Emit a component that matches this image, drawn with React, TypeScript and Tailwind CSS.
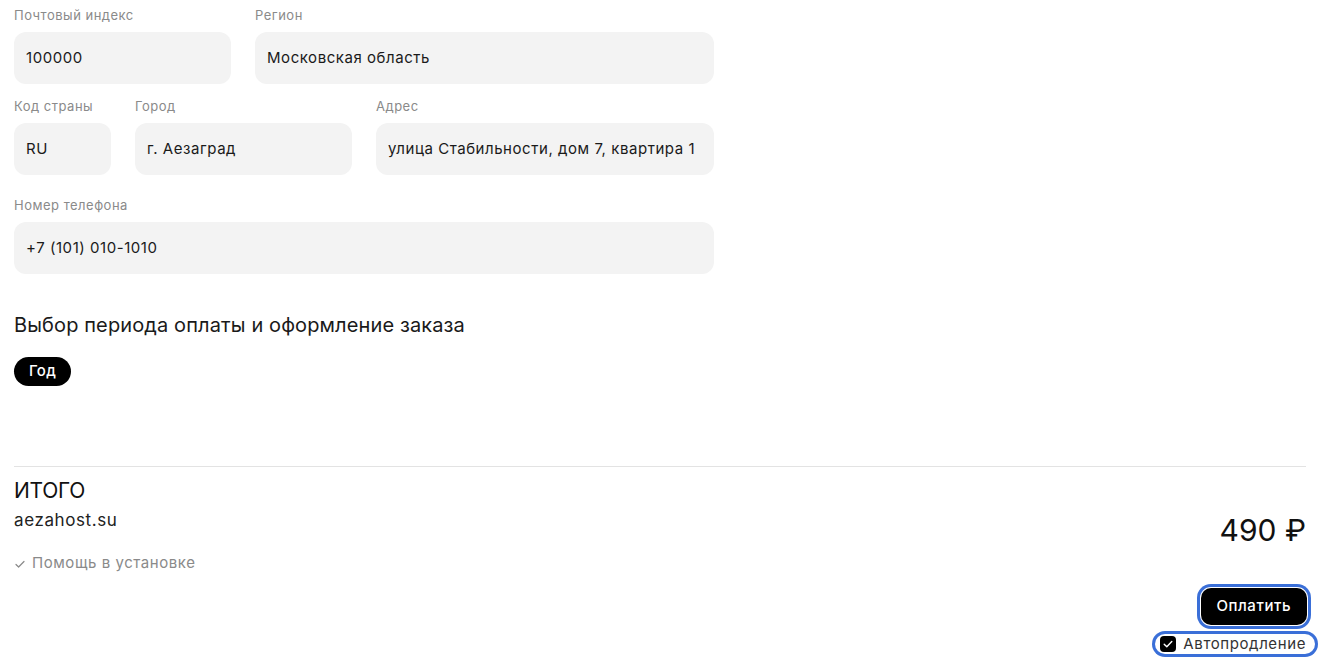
import React from "react";

function Field({ label, value, className }: { label: string; value: string; className: string }) {
  return (
    <div className={"flex flex-col " + className}>
      <div className="text-[13px] leading-[18px] tracking-[0.5px] text-[#8a8a8a]">{label}</div>
      <div className="mt-2 h-[52px] rounded-[12px] bg-[#f3f3f3] flex items-center px-[12px] text-[15px] tracking-[0.55px] text-[#1a1a1a] whitespace-nowrap">
        {value}
      </div>
    </div>
  );
}

export default function App() {
  return (
    <div
      className="w-[1323px] h-[670px] bg-white overflow-hidden pl-[14px] pr-[17px] pt-[6px] text-[#111]"
      style={{ fontFamily: "Inter, 'Noto Sans', sans-serif" }}
    >
      <div className="w-[700px] flex flex-col">
        <div className="flex gap-6">
          <Field label="Почтовый индекс" value="100000" className="w-[217px]" />
          <Field label="Регион" value="Московская область" className="flex-1" />
        </div>
        <div className="flex gap-6 mt-[13px]">
          <Field label="Код страны" value="RU" className="w-[97px]" />
          <Field label="Город" value="г. Аезаград" className="w-[217px]" />
          <Field label="Адрес" value="улица Стабильности, дом 7, квартира 1" className="flex-1" />
        </div>
        <div className="flex mt-[21px]">
          <Field label="Номер телефона" value="+7 (101) 010-1010" className="flex-1" />
        </div>
      </div>

      <div className="mt-[37px] text-[20px] leading-[28px] tracking-[0.12px] text-[#1a1a1a]">
        Выбор периода оплаты и оформление заказа
      </div>
      <div className="mt-[18px] flex">
        <div className="h-[29px] px-[15px] rounded-full bg-black text-white text-[15px] tracking-[0.3px] font-medium flex items-center">
          Год
        </div>
      </div>

      <div className="mt-[80px] border-t border-[#e3e3e3] flex justify-between">
        <div className="flex flex-col">
          <div className="mt-[10px] text-[21px] leading-[28px] tracking-[-0.3px] text-[#111]">ИТОГО</div>
          <div className="mt-[3px] text-[17px] leading-[24px] tracking-[0.6px] text-[#222]">aezahost.su</div>
          <div className="mt-[21px] flex items-center gap-[6px] text-[15px] leading-[20px] tracking-[0.55px] text-[#8a8a8a]">
            <svg width="12" height="12" viewBox="0 0 12 12" fill="none" className="mt-[2px]">
              <path d="M2 6.5 L4.6 9 L10 3.5" stroke="#8a8a8a" strokeWidth="1.2" strokeLinecap="round" strokeLinejoin="round" />
            </svg>
            Помощь в установке
          </div>
        </div>
        <div className="flex flex-col items-end">
          <div className="mt-[45px] text-[30px] leading-[36px] text-[#111]">490 ₽</div>
          <button className="mt-[40px] mr-[-1px] h-[37px] px-[16px] rounded-[10px] bg-black text-white text-[15px] tracking-[0.55px] font-medium ring-[3px] ring-[#3a6fd8] ring-offset-1">
            Оплатить
          </button>
          <label className="mt-[9px] mr-[-9px] h-[20px] pl-[5px] pr-[9px] rounded-full ring-[3px] ring-[#3a6fd8] flex items-center gap-[7px] text-[15px] tracking-[0.6px] text-[#333]">
            <span className="w-[16px] h-[16px] rounded-[4px] bg-black flex items-center justify-center">
              <svg width="12" height="12" viewBox="0 0 12 12" fill="none">
                <path d="M2.2 6.2 L4.8 8.8 L9.8 3.4" stroke="white" strokeWidth="1.4" strokeLinecap="round" strokeLinejoin="round" />
              </svg>
            </span>
            Автопродление
          </label>
        </div>
      </div>
    </div>
  );
}
